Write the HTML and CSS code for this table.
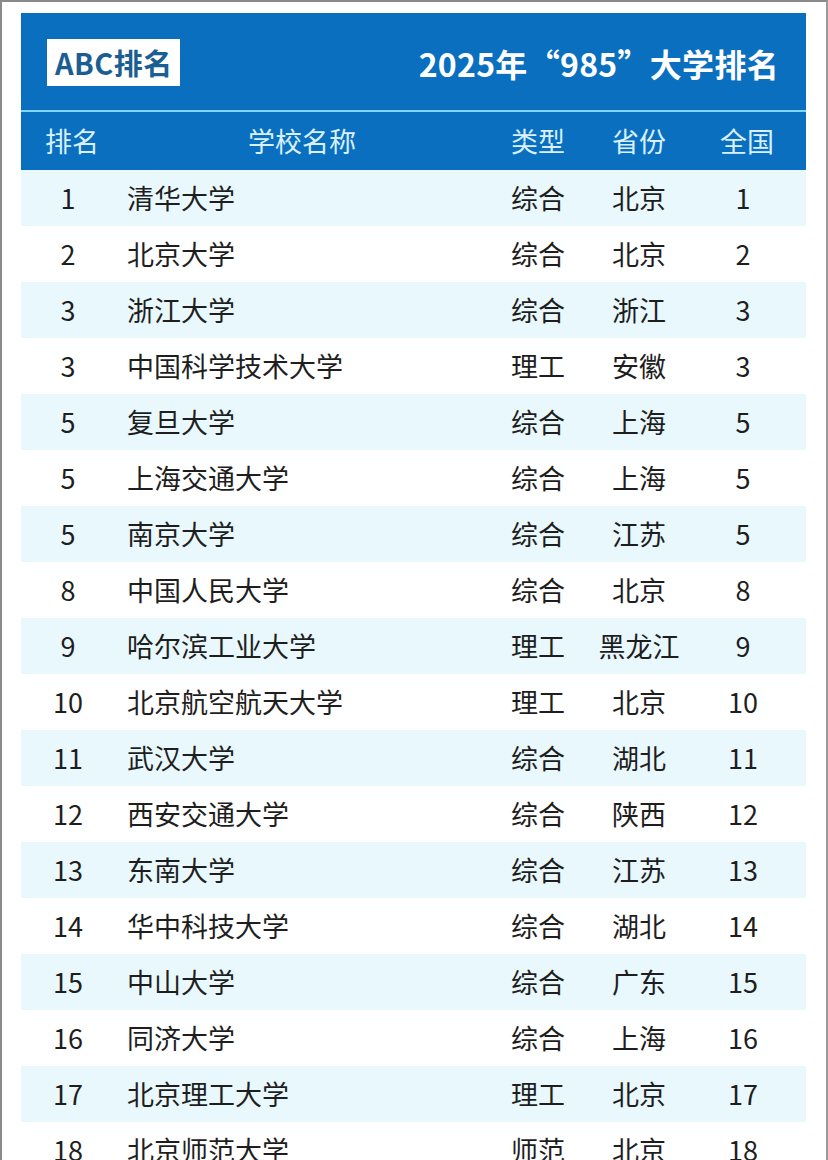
FILE: index.html
```html
<!DOCTYPE html>
<html lang="zh">
<head>
<meta charset="utf-8">
<link rel="stylesheet" href="styles.css">
</head>
<body>
<div class="frame">
  <div class="panel">
    <div class="titlebar">
      <div class="brand">ABC排名</div>
      <div class="title">2025年“985”大学排名</div>
    </div>
    <div class="row head">
      <div class="c-rank">排名</div>
      <div class="c-name">学校名称</div>
      <div class="c-type">类型</div>
      <div class="c-prov">省份</div>
      <div class="c-nat">全国</div>
    </div>
    <div class="body">
      <div class="row"><div class="c-rank">1</div><div class="c-name">清华大学</div><div class="c-type">综合</div><div class="c-prov">北京</div><div class="c-nat">1</div></div>
      <div class="row"><div class="c-rank">2</div><div class="c-name">北京大学</div><div class="c-type">综合</div><div class="c-prov">北京</div><div class="c-nat">2</div></div>
      <div class="row"><div class="c-rank">3</div><div class="c-name">浙江大学</div><div class="c-type">综合</div><div class="c-prov">浙江</div><div class="c-nat">3</div></div>
      <div class="row"><div class="c-rank">3</div><div class="c-name">中国科学技术大学</div><div class="c-type">理工</div><div class="c-prov">安徽</div><div class="c-nat">3</div></div>
      <div class="row"><div class="c-rank">5</div><div class="c-name">复旦大学</div><div class="c-type">综合</div><div class="c-prov">上海</div><div class="c-nat">5</div></div>
      <div class="row"><div class="c-rank">5</div><div class="c-name">上海交通大学</div><div class="c-type">综合</div><div class="c-prov">上海</div><div class="c-nat">5</div></div>
      <div class="row"><div class="c-rank">5</div><div class="c-name">南京大学</div><div class="c-type">综合</div><div class="c-prov">江苏</div><div class="c-nat">5</div></div>
      <div class="row"><div class="c-rank">8</div><div class="c-name">中国人民大学</div><div class="c-type">综合</div><div class="c-prov">北京</div><div class="c-nat">8</div></div>
      <div class="row"><div class="c-rank">9</div><div class="c-name">哈尔滨工业大学</div><div class="c-type">理工</div><div class="c-prov">黑龙江</div><div class="c-nat">9</div></div>
      <div class="row"><div class="c-rank">10</div><div class="c-name">北京航空航天大学</div><div class="c-type">理工</div><div class="c-prov">北京</div><div class="c-nat">10</div></div>
      <div class="row"><div class="c-rank">11</div><div class="c-name">武汉大学</div><div class="c-type">综合</div><div class="c-prov">湖北</div><div class="c-nat">11</div></div>
      <div class="row"><div class="c-rank">12</div><div class="c-name">西安交通大学</div><div class="c-type">综合</div><div class="c-prov">陕西</div><div class="c-nat">12</div></div>
      <div class="row"><div class="c-rank">13</div><div class="c-name">东南大学</div><div class="c-type">综合</div><div class="c-prov">江苏</div><div class="c-nat">13</div></div>
      <div class="row"><div class="c-rank">14</div><div class="c-name">华中科技大学</div><div class="c-type">综合</div><div class="c-prov">湖北</div><div class="c-nat">14</div></div>
      <div class="row"><div class="c-rank">15</div><div class="c-name">中山大学</div><div class="c-type">综合</div><div class="c-prov">广东</div><div class="c-nat">15</div></div>
      <div class="row"><div class="c-rank">16</div><div class="c-name">同济大学</div><div class="c-type">综合</div><div class="c-prov">上海</div><div class="c-nat">16</div></div>
      <div class="row"><div class="c-rank">17</div><div class="c-name">北京理工大学</div><div class="c-type">理工</div><div class="c-prov">北京</div><div class="c-nat">17</div></div>
      <div class="row"><div class="c-rank">18</div><div class="c-name">北京师范大学</div><div class="c-type">师范</div><div class="c-prov">北京</div><div class="c-nat">18</div></div>
    </div>
  </div>
</div>
</body>
</html>
```

FILE: styles.css
```css
html, body {
  margin: 0;
  padding: 0;
  background: #ffffff;
}
body {
  font-family: "Noto Sans CJK SC", "Noto Sans", sans-serif;
  color: #1e1e1e;
}
.frame {
  width: 828px;
  height: 1160px;
  box-sizing: border-box;
  border-top: 2px solid #8a8a8a;
  border-left: 2px solid #8a8a8a;
  border-right: 2px solid #9a9a9a;
  padding-top: 11px;
  padding-left: 19px;
  overflow: hidden;
}
.panel {
  width: 785px;
}
.titlebar {
  background: #0b6fc0;
  height: 99px;
  border-bottom: 2px solid #7fd6f0;
  display: flex;
  align-items: center;
  justify-content: space-between;
  padding: 0 27px 0 26px;
  box-sizing: border-box;
}
.brand {
  background: #ffffff;
  color: #1b5f92;
  font-weight: 700;
  font-size: 29px;
  line-height: 47px;
  height: 47px;
  padding: 0 7px 0 8px;
  letter-spacing: 0.5px;
  margin-top: 2px;
}
.title {
  color: #ffffff;
  font-weight: 700;
  font-size: 32px;
  line-height: 40px;
  letter-spacing: 0.3px;
  margin-top: 2px;
}
.row {
  display: grid;
  grid-template-columns: 94px 374px 98px 104px 104px;
  height: 56px;
  align-items: center;
  font-size: 27px;
  line-height: 56px;
}
.row > div {
  text-align: center;
  white-space: nowrap;
}
.row > .c-name {
  text-align: left;
  padding-left: 12px;
}
.head {
  background: #0b6fc0;
  color: #d9f1ff;
  height: 58px;
  line-height: 58px;
}
.head > .c-name {
  text-align: center;
  padding-left: 0;
}
.head > .c-rank {
  padding-left: 8px;
}
.head > .c-nat {
  padding-left: 8px;
}
.body .row:nth-child(odd) {
  background: #e9f8fc;
}
```
